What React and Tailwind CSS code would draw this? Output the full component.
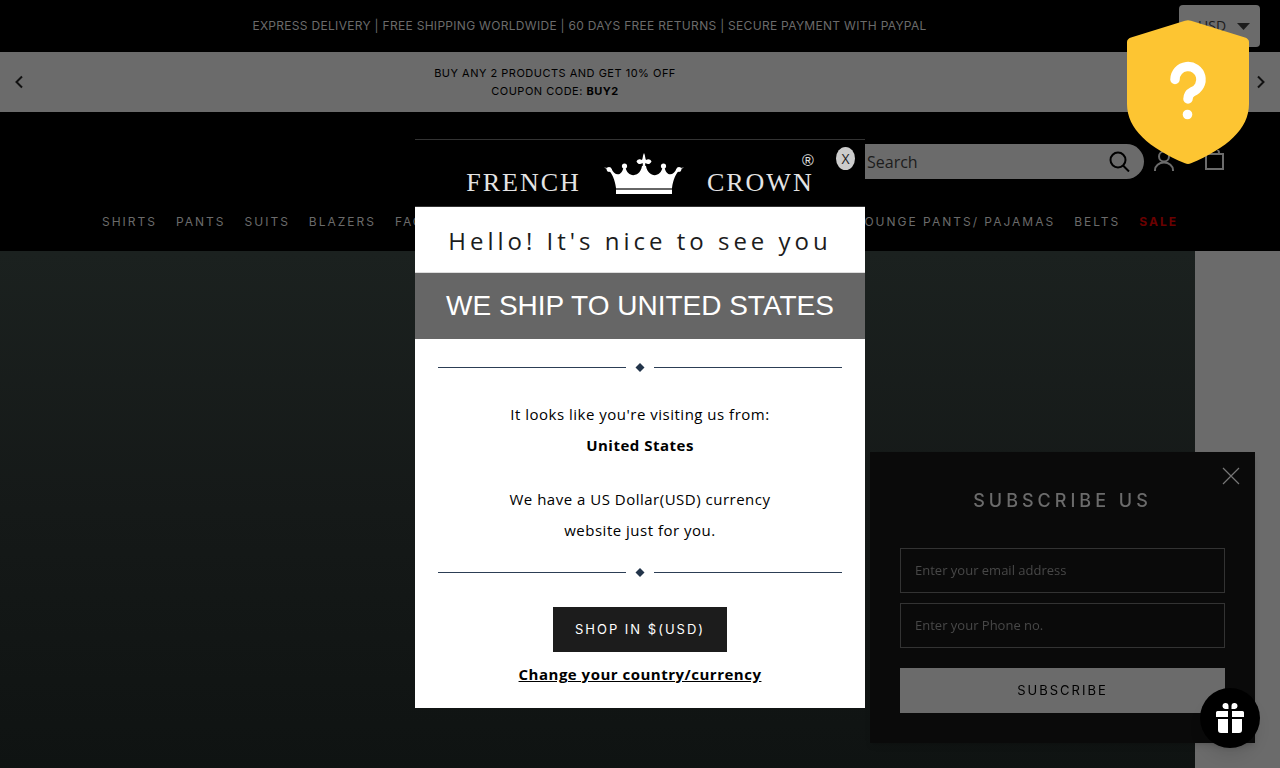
import React, { useState } from "react";

const leftLinks = ["SHIRTS", "PANTS", "SUITS", "BLAZERS", "FACE"];
const rightLinks = ["LOUNGE PANTS/ PAJAMAS", "BELTS"];

const Chevron = ({ flip }) => (
  <svg width="8" height="14" viewBox="0 0 8 14" fill="none" stroke="#111" strokeWidth="2">
    <path d={flip ? "M1 1.5 6.5 7 1 12.5" : "M7 1.5 1.5 7 7 12.5"} />
  </svg>
);

const Crown = () => (
  <svg width="80" height="42" viewBox="0 0 80 42" fill="#fff">
    <path d="M12 35 C11 27 8 20 4 16.500 L0 14.500 L7.500 15.500 C10 23 18 24 19.500 14 H21.500 C23 25 36 25 38 13 H42 C44 25 57 25 58.500 14 H60.500 C62 24 70 23 72.500 15.500 L80 14.500 L76 16.500 C72 20 69 27 68 35 Z" />
    <path d="M38 16 C39 13 39 11 38.500 10 C36 12 33.500 11 32.500 8.500 C33.500 6 36 5.500 38 7 C39 5 38.500 3 40 0 C41.500 3 41 5 42 7 C44 5.500 46.500 6 47.500 8.500 C46.500 11 44 12 41.500 10 C41 11 41 13 42 16 Z" />
    <circle cx="5" cy="16.500" r="2.400" />
    <circle cx="20.500" cy="13" r="2.600" />
    <circle cx="59.500" cy="13" r="2.600" />
    <circle cx="75" cy="16.500" r="2.400" />
    <rect x="12" y="35" width="56" height="2" fill="#666" />
    <rect x="12" y="37" width="56" height="4" />
  </svg>
);

const Divider = () => (
  <div className="flex items-center px-[23px]">
    <div className="h-px flex-1 bg-[#2c3e55]" />
    <svg className="mx-[9px]" width="10" height="9" viewBox="0 0 10 9">
      <path d="M5 0 9.500 4.500 5 9 .5 4.500Z" fill="#22344a" />
    </svg>
    <div className="h-px flex-1 bg-[#2c3e55]" />
  </div>
);

const TopBar = () => (
  <div className="flex h-[52px] items-center bg-black">
    <p className="flex-1 text-center text-xs tracking-wide text-[#6b6b6b]">
      EXPRESS DELIVERY | FREE SHIPPING WORLDWIDE | 60 DAYS FREE RETURNS | SECURE PAYMENT WITH PAYPAL
    </p>
    <div className="relative mr-5">
      <select
        aria-label="Currency"
        className="block h-[42px] w-[81px] appearance-none rounded-[4px] bg-[#6b6b6b] pb-px pl-[19px] font-['Open_Sans',sans-serif] text-sm text-[#1c1c1c]"
      >
        <option>USD</option>
      </select>
      <svg className="pointer-events-none absolute right-[10px] top-[18px]" width="13" height="7" viewBox="0 0 13 7">
        <path d="M0 0H13L6.500 7Z" fill="#1c1c1c" />
      </svg>
    </div>
  </div>
);

const Promo = () => (
  <div className="flex h-[60px] items-center justify-between bg-[#6b6b6b] px-[15px]">
    <button aria-label="Previous">
      <Chevron />
    </button>
    <p className="mr-[170px] text-center text-[11px] leading-[18px] tracking-[0.5px] text-black">
      BUY ANY 2 PRODUCTS AND GET 10% OFF
      <br />
      COUPON CODE: <b>BUY2</b>
    </p>
    <button aria-label="Next">
      <Chevron flip />
    </button>
  </div>
);

const Header = () => (
  <header className="h-[139px] bg-black pt-8">
    <div className="flex items-center justify-end pr-14">
      <div className="flex h-[35px] w-[310px] items-center rounded-full bg-[#6b6b6b] pl-[33px] pr-[14px]">
        <input
          aria-label="Search"
          placeholder="Search"
          className="min-w-0 flex-1 bg-transparent font-['Open_Sans',sans-serif] text-base placeholder:text-[#1c1c1c]"
        />
        <button aria-label="Submit search">
          <svg width="21" height="21" viewBox="0 0 21 21" fill="none" stroke="#000" strokeWidth="2">
            <circle cx="9" cy="9" r="7.500" />
            <path d="M14 14.500 20 20.500" />
          </svg>
        </button>
      </div>
      <a href="#account" aria-label="Account" className="ml-[10px]">
        <svg width="20" height="24" viewBox="0 0 20 24" fill="none" stroke="#6b6b6b" strokeWidth="2">
          <circle cx="10" cy="6.500" r="5" />
          <path d="M1 21V20A9 7.500 0 0 1 19 20V21" />
        </svg>
      </a>
      <a href="#cart" aria-label="Cart" className="ml-[31px]">
        <svg width="19" height="24" viewBox="0 0 19 24" fill="none" stroke="#6b6b6b" strokeWidth="2">
          <path d="M1 4H18V19H1Z M5 4V3A4.500 4.500 0 0 1 14 3V4" />
        </svg>
      </a>
    </div>
    <nav className="mt-[35px] flex justify-between px-[102px] text-xs leading-4 tracking-[2px] text-[#6b6b6b]">
      <div className="flex gap-[19px]">
        {leftLinks.map((link) => (
          <a key={link} href="#shop" className="whitespace-nowrap">
            {link}
          </a>
        ))}
      </div>
      <div className="flex gap-[19px]">
        {rightLinks.map((link) => (
          <a key={link} href="#shop" className="whitespace-nowrap">
            {link}
          </a>
        ))}
        <a href="#sale" className="font-bold text-[#6b0000]">
          SALE
        </a>
      </div>
    </nav>
  </header>
);

const Subscribe = ({ onClose }) => (
  <form className="fixed bottom-[25px] right-[25px] w-[385px] bg-[#0a0a0a] px-[30px] pb-[30px] pt-9 shadow-md">
    <button type="button" aria-label="Close" onClick={onClose} className="absolute right-[15px] top-[15px]">
      <svg width="18" height="18" viewBox="0 0 18 18" stroke="#777" strokeWidth="1.200">
        <path d="M1 1 17 17M17 1 1 17" />
      </svg>
    </button>
    <h2 className="text-center text-lg leading-[26px] font-medium tracking-[4px] text-[#6b6b6b]">SUBSCRIBE US</h2>
    <input
      type="email"
      aria-label="Email address"
      placeholder="Enter your email address"
      className="mt-[34px] block h-[45px] w-full border border-[#333] bg-transparent px-[14px] pb-px font-['Open_Sans',sans-serif] text-[13px] placeholder:text-[#484848]"
    />
    <input
      type="tel"
      aria-label="Phone number"
      placeholder="Enter your Phone no."
      className="mt-[10px] block h-[45px] w-full border border-[#333] bg-transparent px-[14px] pb-px font-['Open_Sans',sans-serif] text-[13px] placeholder:text-[#484848]"
    />
    <button className="mt-5 block h-[45px] w-full bg-[#6b6b6b] text-[13px] tracking-[2px] text-black">
      SUBSCRIBE
    </button>
  </form>
);

const CountryModal = ({ onClose }) => (
  <div className="pointer-events-none fixed inset-0 flex items-start justify-center pt-[139px]">
    <div
      role="dialog"
      aria-label="Choose your country"
      className="pointer-events-auto relative w-[450px] bg-white text-center font-['Open_Sans',sans-serif] text-black"
    >
      <div className="flex h-[68px] items-end justify-center border-y border-[#333] bg-black pb-[11px] font-['Liberation_Serif',serif] text-[26px] leading-6 text-[#e4e4e4]">
        <span className="tracking-[2px]">FRENCH</span>
        <span className="mx-[23px]">
          <Crown />
        </span>
        <span className="relative tracking-[2px]">
          CROWN
          <span className="absolute right-0 -top-[22px] font-['Liberation_Sans',sans-serif] text-base tracking-normal">®</span>
        </span>
      </div>
      <button
        onClick={onClose}
        className="absolute right-[10px] top-2 h-[23px] w-[19px] rounded-[50%] bg-[#ccc] text-sm leading-[23px] text-[#222]"
      >
        X
      </button>
      <h1 className="h-[66px] whitespace-nowrap border-b border-[#ddd] text-2xl leading-[68px] tracking-[4px] text-[#1c1c1c]">
        Hello! It's nice to see you
      </h1>
      <div className="h-[66px] bg-[#666] font-['Liberation_Sans',Arial,sans-serif] text-[28px] leading-[66px] text-white">
        WE SHIP TO UNITED STATES
      </div>
      <div className="pb-[18px] pt-6 text-[15px] leading-[31px] tracking-[0.5px]">
        <Divider />
        <p className="mt-[27px]">
          It looks like you're visiting us from:
          <br />
          <b>United States</b>
        </p>
        <p className="mx-auto mt-[23px] w-[300px]">We have a US Dollar(USD) currency website just for you.</p>
        <div className="mt-[22px]">
          <Divider />
        </div>
        <button className="mx-auto mt-[30px] block h-[45px] w-[174px] bg-[#1c1c1c] font-['Inter',sans-serif] text-[13px] tracking-[2px] text-white">
          SHOP IN $(USD)
        </button>
        <a href="#country" className="mt-[7px] inline-block font-bold underline">
          Change your country/currency
        </a>
      </div>
    </div>
  </div>
);

const Shield = () => (
  <svg className="absolute right-[31px] top-5" width="122" height="144" viewBox="0 0 122 144" fill="none">
    <path
      d="M58 .8Q61-.4 64 .8L118 17.500Q122 19 122 22V84C122 109 100 128 64 143.300Q61 144.600 58 143.300C22 128 0 109 0 84V22Q0 19 4 17.500Z"
      fill="#fdc532"
    />
    <path
      d="M48 59.500A13 13 0 1 1 65.500 71.700Q61 74 61 79"
      stroke="#fff"
      strokeWidth="9.500"
      strokeLinecap="round"
    />
    <circle cx="60.500" cy="94.500" r="4.800" fill="#fff" />
  </svg>
);

const App = () => {
  const [showSubscribe, setShowSubscribe] = useState(true);
  const [showModal, setShowModal] = useState(true);

  return (
    <div className="relative flex h-screen flex-col overflow-hidden bg-[#6b6b6b] font-['Inter',sans-serif]">
      <TopBar />
      <Promo />
      <Header />
      <main className="mr-[85px] flex-1 bg-linear-to-b from-[#1b211f] via-[#151918] to-[#0f1312]" />

      {showSubscribe && <Subscribe onClose={() => setShowSubscribe(false)} />}
      {showModal && <CountryModal onClose={() => setShowModal(false)} />}
      <Shield />
      <button
        aria-label="Rewards"
        className="fixed bottom-5 right-5 flex size-[60px] items-center justify-center rounded-full bg-black shadow-lg"
      >
        <svg width="28" height="30" viewBox="0 0 28 30" fill="#fff">
          <path d="M12.500 6H9A3 3 0 1 1 12.500 3ZM15.500 6H19A3 3 0 1 0 15.500 3Z" />
          <path d="M1.500 8H12V14H0V9.500Q0 8 1.500 8ZM16 8H26.500Q28 8 28 9.500V14H16Z" />
          <path d="M2 16H12V30H5Q2 30 2 27ZM16 16H26V27Q26 30 23 30H16Z" />
        </svg>
      </button>
    </div>
  );
};

export default App;
